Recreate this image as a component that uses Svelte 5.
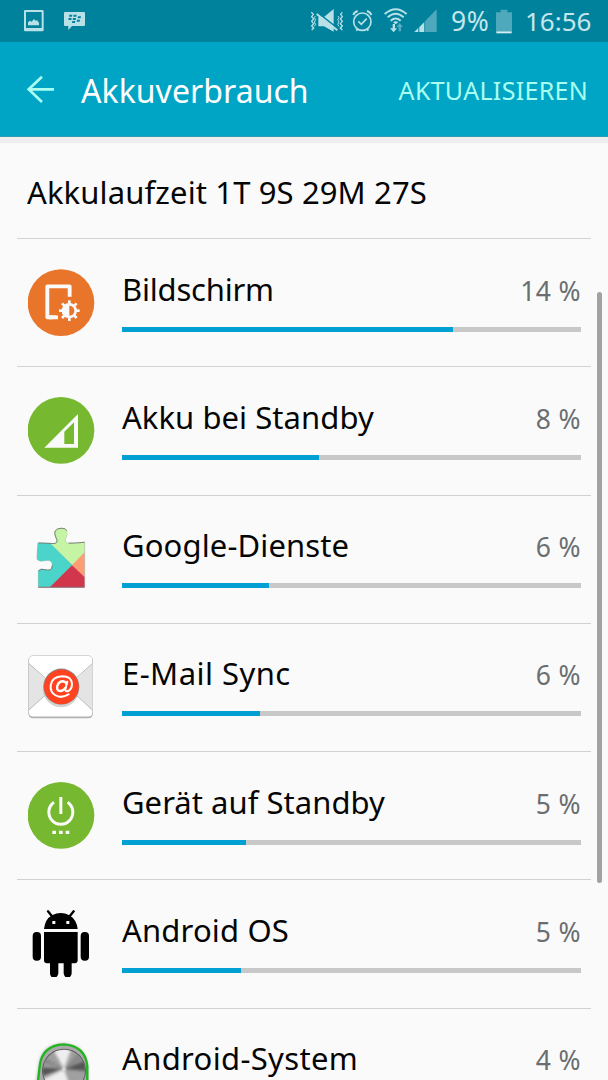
<script>
  const rows = [
    { icon: 'screen', name: 'Bildschirm', value: '14 %', fill: 72.1, spacing: -0.2 },
    { icon: 'signal', name: 'Akku bei Standby', value: '8 %', fill: 43, spacing: 0.06 },
    { icon: 'play', name: 'Google-Dienste', value: '6 %', fill: 32, spacing: 0.13 },
    { icon: 'mail', name: 'E-Mail Sync', value: '6 %', fill: 30, spacing: 0.45 },
    { icon: 'power', name: 'Gerät auf Standby', value: '5 %', fill: 27, spacing: 0.04 },
    { icon: 'android', name: 'Android OS', value: '5 %', fill: 26, spacing: 0.17 },
    { icon: 'system', name: 'Android-System', value: '4 %', fill: 22, spacing: 0.34 }
  ];
  const boxes = {
    screen: '84 326 201 201',
    signal: '39 36 201 201',
    play: '39 30.3 201 201',
    mail: '39 40.2 201 201',
    power: '39 36 201 201',
    android: '39 45 201 201',
    system: '39 115 201 201'
  };
  const teeth = [0, 45, 90, 135, 180, 225, 270, 315];
</script>

<div class="phone">
  <header>
    <div class="status">
      <svg class="notif" viewBox="60 0 210 126">
        <g fill="#b8e0e7">
          <path fill-rule="evenodd" d="M76 30h51q4 0 4 4v56q0 4-4 4H76q-4 0-4-4V34q0-4 4-4zM78 36v48h47V36z" />
          <path d="M84 76v-9l6-5 5 3 7-8 5 5 4-1 6 7v8z" />
          <path d="M195 36h57q3 0 3 3v36q0 3-3 3h-36l-11 12V78h-10q-3 0-3-3V39q0-3 3-3z" />
        </g>
        <g fill="#00829d">
          <path d="M208 44h9l-1 6h-9zM221 44h9l-1 6h-9zM206 54h9l-1 6h-9zM219 54h9l-1 6h-9zM234 49h9l-1 6h-9zM231 59h9l-1 6h-9zM217 63h9l-1 6h-9z" />
        </g>
      </svg>
      <div class="right">
        <svg class="indicators" viewBox="24 0 396 126">
          <g fill="none" stroke="#b8e0e7" stroke-width="3.6">
            <path d="M34 37l6 6-5 7 6 7-6 7 6 7-6 7 6 6-6 6M127 37l-5 6 5 7-6 7 6 7-6 7 6 7-6 6 6 6" stroke-width="4" />
            <path d="M46 48l-3 5 4 6-4 7 4 7-4 6M114 48l3 5-4 6 4 7-4 7 4 6" stroke-width="3" />
            <circle cx="187" cy="65" r="26" stroke-width="5" />
            <path d="M175 64l9 9 16-17" stroke-width="5" />
            <path d="M160 45q3-9 13-12M214 45q-3-9-13-12M169 92l5-6M205 92l-5-6" stroke-width="6" />
            <path d="M254 42q33-29 66 0M263 52q24-21 48 0M272 62q15-13 30 0" stroke-width="6" />
          </g>
          <path d="M55 51h17l29-24v68L72 79H55z" fill="#b8e0e7" />
          <path d="M52 37L114 86" stroke="#00829d" stroke-width="5" />
          <path d="M50 42L112 91" stroke="#b8e0e7" stroke-width="6" />
          <path d="M279 67q8-7 16 0l-8 6z" fill="#b8e0e7" />
          <path d="M278 72h7v13h6L281 97l-11-12h8z" fill="#b8e0e7" />
          <path d="M296 94V81h-7l10-12 10 12h-6v13z" fill="#55abc0" />
          <path d="M343 96L410 28v68z" fill="#4ea9bc" />
          <path d="M343 96l12-12v12zM358 82l15-15v29h-15z" fill="#b8e0e7" />
          <path d="M356 82v14M374 62v34" stroke="#00829d" stroke-width="2" />
        </svg>
        <span class="charge">9%</span>
        <svg class="battery" viewBox="168 24 48 75"><path d="M168 34h14v-8h20v8h14v57h-48z" fill="#4da9bb" /><path d="M169 91h46v6h-46z" fill="#d5edf1" /></svg>
        <span class="clock">16:56</span>
      </div>
    </div>
    <div class="appbar">
      <svg class="back" viewBox="78 225 90 87" fill="none" stroke="#a9fff0" stroke-width="8"><path d="M162 268H86M126 230L86 268l40 38" /></svg>
      <h1>Akkuverbrauch</h1>
      <span class="action">AKTUALISIEREN</span>
    </div>
  </header>

  <main>
    <h2>Akkulaufzeit 1T 9S 29M 27S</h2>
    {#each rows as row}
      <section class="row">
        <svg class="icon" viewBox={boxes[row.icon]}>
          {#if row.icon === 'screen'}
            <circle cx="183" cy="427" r="100" fill="#e9752b" />
            <path d="M209 409V378H142V471H174" fill="none" stroke="#fafafa" stroke-width="11.5" stroke-linejoin="round" />
            <path d="M160 460L179 480H160z" fill="#e9752b" />
            <path d="M146 465h22l7 12h-29z" fill="#fafafa" />
            <g transform="translate(208 451)">
              {#each teeth as angle}
                <rect x="-4" y="-31" width="8" height="14" fill="#fafafa" transform="rotate({angle})" />
              {/each}
              <circle r="23" fill="#fafafa" />
              <path d="M0-15a15 15 0 0 1 0 30z" fill="#e9752b" />
            </g>
          {:else if row.icon === 'signal'}
            <circle cx="138" cy="136" r="100" fill="#76b82f" />
            <path fill-rule="evenodd" d="M88 188L189 87v101zM148 140v37h29V112z" fill="#fafafa" />
          {:else if row.icon === 'play'}
            <defs>
              <clipPath id="puzzle"><path d="M69 84q27 1 47 2 11-1 9-11-9-19-5-27 5-8 19-8 13 0 16 8 4 10-3 22-4 13 9 15 25 0 48-3V217H70V168q8-8 18-4 24 7 24-13 0-18-22-14-15 5-24-4-1-8 3-49z" /></clipPath>
            </defs>
            <path d="M69 84q27 1 47 2 11-1 9-11-9-19-5-27 5-8 19-8 13 0 16 8 4 10-3 22-4 13 9 15 25 0 48-3V217H70V168q8-8 18-4 24 7 24-13 0-18-22-14-15 5-24-4-1-8 3-49z" fill="#aaa" stroke="#b5bab7" stroke-width="2" />
            <g clip-path="url(#puzzle)">
              <path d="M60 30h150v82l-38 39-64-63z" fill="#c5f4a5" />
              <path d="M60 80h40l72 71-66 66H60z" fill="#4bd4ca" />
              <path d="M209 112v77l-38-38z" fill="#ff9c74" />
              <path d="M171 151l40 38v30H102z" fill="#d2364c" />
            </g>
            <path d="M70 84q27 1 47 2 11-1 9-11-9-19-5-27 5-8 19-8 13 0 16 8M161 85q25 0 48-3M70 168q8-8 18-4 24 7 24-13" fill="none" stroke="#68736c" stroke-width="3" opacity=".8" />
            <path d="M70 217h139" stroke="#8d6a70" stroke-width="3" />
          {:else if row.icon === 'mail'}
            <rect x="40" y="48" width="194" height="188" rx="14" fill="#b1b1b1" />
            <rect x="42" y="49" width="190" height="182" rx="12" fill="#fff" />
            <path d="M42 72L115 142 42 211zM232 72L160 142l72 69z" fill="#e4e4e4" />
            <path d="M42 72l73 65M232 72l-73 65M42 211l60-55M232 211l-60-55" stroke="#b9b9b9" stroke-width="3" />
            <circle cx="138" cy="149" r="54" fill="#bbb" opacity=".65" />
            <circle cx="139" cy="141" r="54" fill="#8f8784" />
            <circle cx="139" cy="142" r="52" fill="#ff4320" />
            <g fill="none" stroke="#fff" stroke-linecap="round">
              <path d="M161 164Q139 178 121 167 105 157 107 138 110 111 142 110 169 110 171 132 171 152 157 155 148 155 152 145L157 126" stroke-width="6" />
              <path d="M152 144Q143 156 133 154 124 151 127 139 131 125 144 125 152 126 154 132" stroke-width="7" />
            </g>
          {:else if row.icon === 'power'}
            <circle cx="138" cy="136" r="100" fill="#76b82f" />
            <path d="M117 97a36 36 0 1 0 41 0" fill="none" stroke="#fafafa" stroke-width="9" />
            <path d="M133 81h9v51h-9zM112 182h11v10h-11zM132 182h11v10h-11zM152 182h11v10h-11z" fill="#fafafa" />
          {:else if row.icon === 'android'}
            <path d="M87 102Q90 73 111 61q27-14 52 0 22 13 25 41zM87 111h101v85q0 9-9 9h-9v30q-1 13-12 13t-12-13v-30h-16v30q-1 13-13 13t-12-13v-30h-9q-9 0-9-9z" />
            <rect x="53" y="111" width="25" height="86" rx="12" />
            <rect x="197" y="111" width="25" height="86" rx="12" />
            <path d="M99 49l12 15M176 49l-12 15" stroke="#000" stroke-width="7" stroke-linecap="round" />
            <path d="M112 78h9v9h-9zM154 78h9v9h-9z" fill="#fafafa" />
          {:else}
            <defs>
              <filter id="soften" x="-10%" y="-10%" width="120%" height="120%"><feGaussianBlur stdDeviation="4" /></filter>
              <clipPath id="knob"><circle cx="147" cy="213" r="63" /></clipPath>
            </defs>
            <path d="M60 270l11-76Q78 134 145 131q64 3 74 64v75z" fill="#999" opacity=".6" filter="url(#soften)" />
            <path d="M66 270l8-70Q81 137 146 134q65 4 71 66v70z" fill="#aaa" stroke="#20b421" stroke-width="7" />
            <circle cx="147" cy="213" r="66" fill="#5c5c5c" />
            <circle cx="147" cy="213" r="63" fill="#a0a0a0" />
            <g clip-path="url(#knob)">
              <g filter="url(#soften)">
                <path d="M147 208L112 145q30-11 58 0zM147 208l-70 35 10 50h90z" fill="#eee" />
                <path d="M147 208L80 203v27zM147 208l70-28v34z" fill="#555" />
                <path d="M147 208L85 170l-5 20zM147 208l43-50 17 22z" fill="#888" />
              </g>
              <circle cx="147" cy="208" r="5" fill="#fff" filter="url(#soften)" />
            </g>
          {/if}
        </svg>
        <div class="details">
          <div class="line">
            <span class="name" style="letter-spacing: {row.spacing}px">{row.name}</span>
            <span class="value">{row.value}</span>
          </div>
          <div class="track"><div class="fill" style="width: {row.fill}%"></div></div>
        </div>
      </section>
    {/each}
  </main>
  <div class="scrollbar"></div>
</div>

<style>
  :global(body) { margin: 0; background: #fafafa; }
  .phone {
    position: relative;
    width: 608px;
    height: 1080px;
    overflow: hidden;
    background: #fafafa;
    font-family: "Noto Sans", sans-serif;
    color: #050505;
    white-space: nowrap;
  }
  svg { display: block; flex: none; }
  header { border-bottom: 6px solid #eceef0; }
  .status {
    height: 42px;
    display: flex;
    justify-content: space-between;
    padding: 0 16px 0 20px;
    background: #00829d;
    color: #c5e6ec;
  }
  .notif { width: 70px; height: 42px; }
  .right { display: flex; align-items: center; }
  .indicators { width: 132px; height: 42px; margin-right: 11px; }
  .charge, .clock { font-size: 26px; line-height: 42px; }
  .charge { width: 45px; font-size: 26.5px; letter-spacing: 0.5px; }
  .battery { width: 16px; height: 25px; }
  .clock { width: 67px; margin-left: 13px; }
  .appbar {
    height: 94px;
    display: flex;
    align-items: center;
    padding: 0 20px 0 26px;
    background: #00a5c6;
    border-bottom: 1px solid #2d9db4;
    box-sizing: content-box;
  }
  .back { width: 30px; height: 29px; }
  h1 { margin: 0 auto 0 25px; padding-top: 3px; font-size: 32px; font-weight: 400; line-height: 44px; letter-spacing: 0.05px; color: #fff; }
  .action { padding-top: 1px; font-size: 25px; line-height: 36px; letter-spacing: 0.3px; color: #a9fff0; }
  main { padding: 0 17px; }
  h2 {
    height: 95px;
    margin: 0;
    padding-left: 10px;
    font-size: 31px;
    font-weight: 400;
    line-height: 98px;
    letter-spacing: 0.13px;
  }
  .row {
    height: 128.3px;
    box-sizing: border-box;
    border-top: 1px solid #d2d2d2;
    display: flex;
    padding: 29.5px 10px 0 11px;
  }
  .icon { width: 67px; height: 67px; margin-right: 27px; }
  .details { flex: 1; }
  .line { height: 58px; display: flex; justify-content: space-between; }
  .name { font-size: 31px; line-height: 40px; }
  .value { font-size: 26.5px; line-height: 45px; letter-spacing: 0.4px; color: #6b6e70; }
  .track { height: 5px; background: #c8c8c8; }
  .fill { height: 5px; background: #00a1d2; }
  .scrollbar { position: absolute; left: 597px; top: 292px; width: 5px; height: 591px; border-radius: 3px; background: #a0a2a3; }
</style>
